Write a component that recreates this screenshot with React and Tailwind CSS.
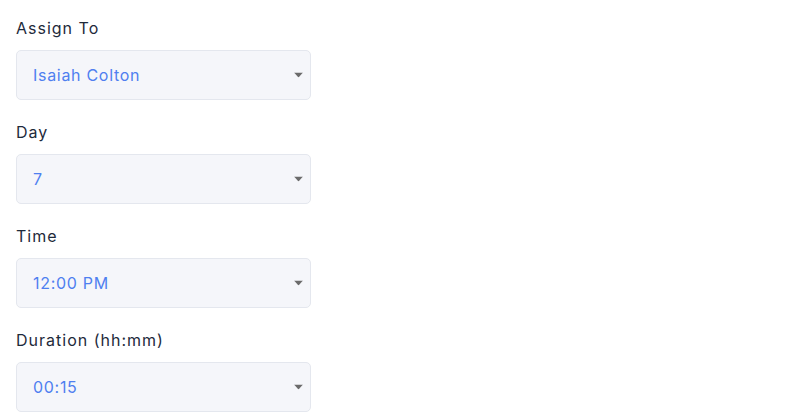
const fields = [
  { label: 'Assign To', value: 'Isaiah Colton' },
  { label: 'Day', value: '7' },
  { label: 'Time', value: '12:00 PM' },
  { label: 'Duration (hh:mm)', value: '00:15' },
];

function SelectField({ label, value }) {
  return (
    <div className="mb-5">
      <label className="block text-[16px] leading-[24px] tracking-[1px] text-[#1e2a3b] mb-[10px]">{label}</label>
      <div className="relative w-[295px] h-[50px] rounded-[5px] border border-[#e4e7ee] bg-[#f5f6fa] flex items-center pl-4 pr-8">
        <span className="text-[16px] tracking-[0.7px] text-[#4f7ff0]">{value}</span>
        <svg className="absolute right-[7px] top-1/2 -translate-y-1/2" width="9" height="5" viewBox="0 0 9 5">
          <path d="M0 0h9L4.5 5z" fill="#6b6b6b" />
        </svg>
      </div>
    </div>
  );
}

export default function App() {
  return (
    <div className="min-h-screen bg-white pl-4 pt-4" style={{ fontFamily: 'Inter, "Noto Sans", sans-serif' }}>
      {fields.map((f) => (
        <SelectField key={f.label} {...f} />
      ))}
    </div>
  );
}
